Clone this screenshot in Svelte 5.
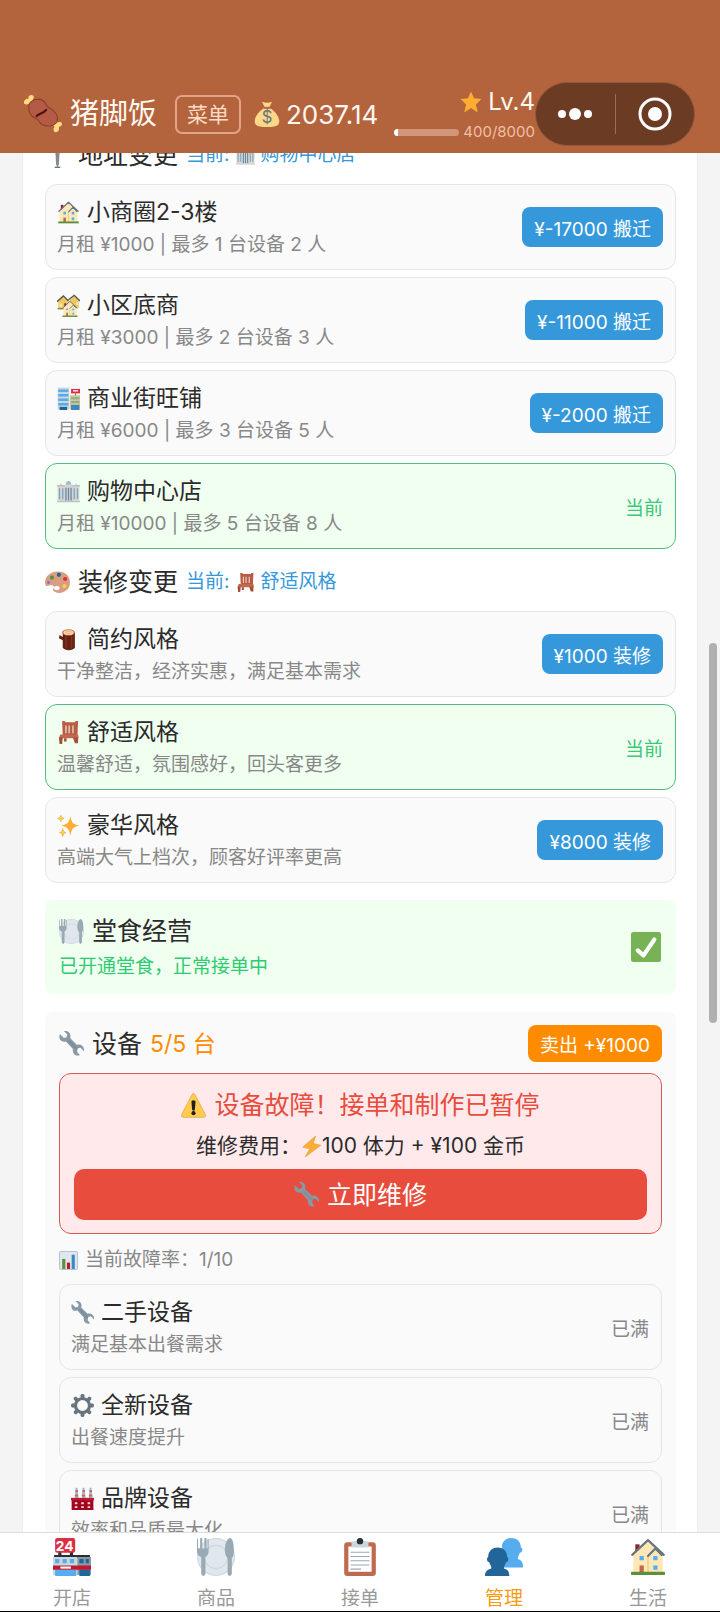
<script>
  let money = $state(2037.14);
  let exp = $state(400);
  let expMax = 8000;

  let places = [
    { id: 1, icon: "house", name: "小商圈2-3楼", desc: "月租 ¥1000 | 最多 1 台设备 2 人", action: "¥-17000 搬迁" },
    { id: 2, icon: "houses", name: "小区底商", desc: "月租 ¥3000 | 最多 2 台设备 3 人", action: "¥-11000 搬迁" },
    { id: 3, icon: "office", name: "商业街旺铺", desc: "月租 ¥6000 | 最多 3 台设备 5 人", action: "¥-2000 搬迁" },
    { id: 4, icon: "mall", name: "购物中心店", desc: "月租 ¥10000 | 最多 5 台设备 8 人", current: true },
  ];
  let styles = [
    { id: 1, icon: "wood", name: "简约风格", desc: "干净整洁，经济实惠，满足基本需求", action: "¥1000 装修" },
    { id: 2, icon: "chair", name: "舒适风格", desc: "温馨舒适，氛围感好，回头客更多", current: true },
    { id: 3, icon: "sparkles", name: "豪华风格", desc: "高端大气上档次，顾客好评率更高", action: "¥8000 装修" },
  ];
  let devices = [
    { id: 1, icon: "wrench", name: "二手设备", desc: "满足基本出餐需求", full: true },
    { id: 2, icon: "gear", name: "全新设备", desc: "出餐速度提升", full: true },
    { id: 3, icon: "factory", name: "品牌设备", desc: "效率和品质最大化", full: true },
  ];
  let tabs = [
    { id: "open", icon: "store", label: "开店" },
    { id: "goods", icon: "plate", label: "商品" },
    { id: "orders", icon: "clipboard", label: "接单" },
    { id: "manage", icon: "people", label: "管理" },
    { id: "life", icon: "house", label: "生活" },
  ];
  let activeTab = $state("manage");
</script>

{#snippet houseShape()}
  <path fill="#8a2432" d="M6 6h4v8H6z" />
  <path fill="#ffe8b6" d="M4 16 18 3l14 13v17H4z" />
  <path fill="none" stroke="#66757f" stroke-width="2" stroke-linecap="round" stroke-linejoin="round" d="M3 16 18 2l15 14M18 17l7-7 6 6" />
  <path fill="#55acee" d="M10 17h4v4h-4zM23 17h4v4h-4zM23 26h4v4h-4z" />
  <path fill="#c1694f" d="M10 26h4v7h-4z" />
  <path fill="none" stroke="#e0c384" d="M18 18v15" />
  <path fill="#5c913b" d="M2 32h32v3H2z" />
{/snippet}

{#snippet icon(name)}
  <svg class="icon" viewBox="0 0 36 36" aria-hidden="true">
    {#if name === "house"}
      {@render houseShape()}
    {:else if name === "houses"}
      <path fill="#f0c75e" d="M2 11l8-8 8 8v13H2zM20 9l7-7 7 7v13H20z" />
      <path fill="none" stroke="#4d5358" stroke-width="2" d="M0 12 10 3l8 8M18 9l9-7 9 9" />
      <path fill="#ffe8b6" d="M4 15h4v5H4zM30 13h3v4h-3z" />
      <path fill="#5c913b" d="M1 22h10v2H1z" />
      <g transform="translate(7 10) scale(.74)">{@render houseShape()}</g>
    {:else if name === "office"}
      <path fill="#ccd6dd" d="M1 1h18v34H1z" />
      <path fill="#55acee" d="M2 4h16v4H2zM2 11h16v4H2zM2 18h16v4H2zM2 25h16v4H2z" />
      <path fill="#226699" d="M4 31h12v5H4z" />
      <path fill="#dd2e44" d="M22 3h14v7H22z" />
      <path fill="#fff" d="M25 5h8v2h-8z" />
      <path fill="#66757f" d="M28 10h2v4h-2z" />
      <path fill="#d9c38a" d="M20 13h16v22H20z" />
      <path fill="#77b5a0" d="M22 16h13v3H22zM22 22h13v3H22z" />
      <path fill="#3b88c3" d="M22 28h13v8H22z" />
    {:else if name === "mall"}
      <path fill="#aab8c2" d="M14 6c0-6 8-6 8 0v4h-8z" />
      <path fill="#e1d3c5" d="M1 9h34v24H1z" />
      <path fill="#ccd6dd" d="M12 7h12v26H12z" />
      <path fill="#66a9d8" d="M3 13h2v17H3zM8 13h2v17H8zM26 13h2v17h-2zM31 13h2v17h-2z" />
      <path fill="#6d8597" d="M13 12h2v20h-2zM17 12h2v20h-2zM21 12h2v20h-2z" />
      <path fill="#b8c2ca" d="M0 8h5V6h2v2h5v2H0zM24 8h5V6h2v2h5v2H24zM0 33h36v2H0z" />
    {:else if name === "pin"}
      <circle cx="18" cy="8" r="7" fill="#dd2e44" />
      <path fill="#808b92" d="M15 14h6l-1 17-2 4-2-4z" />
      <path fill="#66757f" d="M14 34h8v2h-8z" />
    {:else if name === "palette"}
      <path fill="#d99e82" d="M19 2C8 2 0 9 0 18c0 3 1 5 3 5 3 0 6-3 9 0 3 2-2 4 0 7 2 2 5 3 8 3 10 0 16-7 16-15C36 8 29 2 19 2z" />
      <ellipse cx="17" cy="26" rx="4" ry="3" fill="#fff" />
      <circle cx="10" cy="11" r="3" fill="#5c913b" />
      <circle cx="20" cy="7" r="3" fill="#226699" />
      <circle cx="29" cy="13" r="3" fill="#dd2e44" />
      <circle cx="28" cy="23" r="3" fill="#ffcc4d" />
      <circle cx="5" cy="18" r="2" fill="#9268ca" />
    {:else if name === "wood"}
      <path fill="#662113" d="M9 7h19v24c-3 5-16 5-19 0V19l-6-3 1-5 5 3z" />
      <path fill="#853522" d="M22 12h2v20h-2zM13 13h2v18h-2z" />
      <ellipse cx="18" cy="7" rx="10" ry="5" fill="#c1694f" />
      <ellipse cx="18" cy="7" rx="8" ry="4" fill="#ffd3a1" />
      <ellipse cx="18" cy="7" rx="4" ry="2" fill="none" stroke="#d99e82" />
    {:else if name === "chair"}
      <path fill="#b85c43" d="M8 0h4l1 2h15l1-2h4l-1 23H9z" />
      <path fill="#f0dcd2" d="M13 7h2v12h-2zM18 7h2v12h-2zM24 7h2v12h-2z" />
      <path fill="#c1694f" d="M5 21h28l1 6H3z" />
      <path fill="#a34f37" d="M3 26h6l-1 10H4zM25 26h8v9h-5zM11 27h4v5h-4z" />
    {:else if name === "sparkles"}
      <path fill="#ffac33" d="M21 3c2 11 4 13 14 15-10 2-12 5-14 16-2-11-5-14-14-16 9-2 12-4 14-15z" />
      <path fill="#ffcc4d" stroke="#e6a63c" d="M6 2c1 3 2 4 5 5-3 1-4 2-5 5-1-3-2-4-5-5 3-1 4-2 5-5zM9 23c1 4 2 5 5 6-3 1-4 2-5 6-1-4-2-5-5-6 3-1 4-2 5-6z" />
    {:else if name === "plate"}
      <circle cx="18" cy="18" r="18" fill="#ccd6dd" />
      <circle cx="18" cy="18" r="17" fill="#e1e8ed" />
      <circle cx="18" cy="18" r="11" fill="none" stroke="#ccd6dd" stroke-width="1" />
      <path fill="#99aab5" d="M0 1h1v9h2V0h2v10h2V0h2v10h1V1h1v12c0 3-2 4-3 5v16q-2 4-4 0V18c-2-1-4-2-4-5zM31 0c3 0 4 6 4 12 0 4-1 6-2 7v15q-2 4-4 0V19c-5-5-2-18 2-19z" />
    {:else if name === "wrench"}
      <path fill="#8899a6" d="M2 5l5 5 4-1 1-4-5-5c7-1 11 4 9 10l10 10c6-2 11 3 10 9l-5-5-4 1-1 5 4 5c-7 2-11-3-10-9L10 15C4 17-1 12 1 5z" />
      <path fill="#66757f" d="M13 15l2-2 12 12-2 2z" opacity=".3" />
    {:else if name === "gear"}
      <circle cx="18" cy="18" r="11" fill="none" stroke="#66757f" stroke-width="5" />
      {#each [0, 45, 90, 135, 180, 225, 270, 315] as angle}
        <path fill="#66757f" transform="rotate({angle} 18 18)" d="M15 8V2q0-2 3-2t3 2v6z" />
      {/each}
    {:else if name === "factory"}
      <path fill="#a9b4bb" d="M7 1h3l2 18H6zM18 1h3l2 18h-6zM29 1h3l2 18h-6z" />
      <path fill="#be6472" d="M7 5h4v3H7zM18 5h4v3h-4zM29 5h4v3h-4zM6 12h5v3H6zM17 12h5v3h-5zM28 12h5v3h-5z" />
      <path fill="#a0041e" d="M1 18h34v18H1z" />
      <path fill="#be1931" d="M0 17h36v4H0z" />
      <path fill="#f4d7dc" d="M6 24h4v3H6zM16 24h4v3h-4zM26 24h4v3h-4zM6 30h4v3H6zM16 30h4v3h-4zM26 30h4v3h-4z" />
    {:else if name === "warning"}
      <path fill="#ffcc4d" stroke="#d2a53f" d="M16 2q2-3 4 0l15 29q1 4-2 4H3q-3 0-2-4z" />
      <path fill="#231f20" d="M15 12q3-3 6 0l-1 12q-2 3-4 0z" />
      <circle cx="18" cy="29" r="3" fill="#231f20" />
    {:else if name === "bolt"}
      <path fill="#ffac33" stroke="#dc9b3a" stroke-linejoin="round" d="M25 0 3 19l12 3L7 36l27-20-13-3z" />
    {:else if name === "chart"}
      <rect width="36" height="36" rx="4" fill="#b5c6d3" />
      <rect x="2" y="2" width="32" height="32" rx="2" fill="#e1e8ed" />
      <path fill="#5c913b" d="M6 15h6v19H6z" />
      <path fill="#be1931" d="M15 22h6v12h-6z" />
      <path fill="#3b88c3" d="M24 7h6v27h-6z" />
    {:else if name === "check"}
      <rect width="36" height="36" rx="3" fill="#77b255" />
      <path fill="none" stroke="#fff" stroke-width="5" stroke-linecap="round" stroke-linejoin="round" d="M8 22l7 6L28 9" />
    {:else if name === "meat"}
      <path fill="#ffdc84" d="M1 5q1-2 3-1 0-4 3-4 3 0 2 3l-1 2 5 6-3 3-5-6q-3 2-5 0-1-2 1-3zM25 23l3-2 4 5q3-1 4 1 0 3-3 3 1 4-2 5-3 1-3-3l1-2-5-5z" />
      <path fill="#b55a45" stroke="#8a3f2d" d="M7 6c4-3 12-3 14 3 1 3 4 3 7 6 4 3 5 9 2 12s-9 3-13 1c-3-2-2-4-6-6C5 20 2 10 7 6z" />
      <path fill="none" stroke="#4b130c" stroke-width="2" stroke-linecap="round" d="M12 20c1-2 6-2 9-6" />
    {:else if name === "bag"}
      <path fill="#fdd888" d="M11 1q7 3 14 0l-4 8c7 4 14 12 14 19 0 6-4 8-17 8S1 34 1 28C1 21 8 13 15 9z" />
      <path fill="#bf6952" d="M13 8h10v3H13z" />
      <text x="18" y="31" text-anchor="middle" font-size="23" font-family="Inter, sans-serif" fill="#67757f">$</text>
    {:else if name === "star"}
      <path fill="#ffac33" d="M18 1l5 11 12 1-9 9 3 13-11-7-11 7 3-13-9-9 12-1z" />
    {:else if name === "store"}
      <path fill="#292f33" d="M5 13h3v6H5zM16 13h3v6h-3zM1 16h34v3H1z" />
      <rect x="2" width="19" height="14" rx="2" fill="#dd2e44" />
      <text x="11" y="12" text-anchor="middle" font-size="13" font-weight="700" font-family="Inter, sans-serif" fill="#fff">24</text>
      <path fill="#ccd6dd" d="M0 18h23v17H0z" />
      <path fill="#8899a6" d="M23 18h13v17H23z" />
      <path fill="#55acee" d="M2 20h4v4H2zM9 20h4v4H9zM16 20h4v4h-4zM2 30h20v6H2z" />
      <path fill="#226699" d="M25 20h4v4h-4zM31 20h3v4h-3zM25 30h10v6H25z" />
      <path fill="#be1931" d="M0 26h36v4H0z" />
      <path fill="#fff" d="M7 27h10v2H7z" />
    {:else if name === "clipboard"}
      <rect x="3" y="4" width="30" height="32" rx="3" fill="#c1694f" />
      <path fill="#fff" d="M7 8h22v24H7z" />
      <path fill="#ccd6dd" d="M10 3h4q4-6 8 0h4v6H10z" />
      <circle cx="18" cy="3" r="3" fill="#292f33" />
      <path fill="#99aab5" d="M9 13h18v1H9zM9 17h18v1H9zM9 21h18v1H9zM9 25h18v1H9zM9 29h10v1H9z" />
    {:else if name === "people"}
      <path fill="#55acee" d="M16 9c0-12 18-12 18 0 2 0 2 5-1 5-1 3-2 4-2 6 3 1 5 2 5 8H14c0-4 2-5 5-8 0-3-3-5-3-11z" />
      <path fill="#226699" d="M3 18c0-12 18-12 18 0 2 1 1 5-1 5-1 3-2 3-2 6 3 1 5 2 5 7H0c0-5 3-6 6-7 0-3-1-3-2-6-2 0-3-4-1-5z" />
    {/if}
  </svg>
{/snippet}

{#snippet card(item)}
  <li class="card" class:current={item.current}>
    <div class="info">
      <div class="name">{@render icon(item.icon)}<span>{item.name}</span></div>
      <div class="desc">{item.desc}</div>
    </div>
    {#if item.current}
      <span class="tag">当前</span>
    {:else if item.full}
      <span class="tag full">已满</span>
    {:else}
      <button type="button" class="btn">{item.action}</button>
    {/if}
  </li>
{/snippet}

<div class="app">
  <header class="topbar">
    <span class="logo">{@render icon("meat")}</span>
    <h1>猪脚饭</h1>
    <button type="button" class="menu">菜单</button>
    <span class="money">{@render icon("bag")}{money}</span>
    <div class="level">
      <div class="lv">{@render icon("star")}<span>Lv.4</span></div>
      <div class="exp">
        <div class="bar"><div class="fill" style="width: {(exp / expMax) * 100}%"></div></div>
        <span>{exp}/{expMax}</span>
      </div>
    </div>
    <div class="capsule">
      <button type="button" aria-label="更多">
        <svg viewBox="0 0 36 14" width="36" height="14"><circle cx="5" cy="7" r="4" /><circle cx="18" cy="7" r="6" /><circle cx="31" cy="7" r="4" /></svg>
      </button>
      <button type="button" aria-label="关闭">
        <svg viewBox="0 0 34 34" width="34" height="34"><circle cx="17" cy="17" r="15" fill="none" stroke="#fff" stroke-width="3" /><circle cx="17" cy="17" r="7" /></svg>
      </button>
    </div>
  </header>

  <main>
    <div class="panel">
      <h2>{@render icon("pin")}地址变更 <small>当前: {@render icon("mall")}购物中心店</small></h2>
      <ul>
        {#each places as item (item.id)}{@render card(item)}{/each}
      </ul>

      <h2>{@render icon("palette")}装修变更 <small>当前: {@render icon("chair")}舒适风格</small></h2>
      <ul>
        {#each styles as item (item.id)}{@render card(item)}{/each}
      </ul>

      <section class="dining">
        <div>
          <h3>{@render icon("plate")}堂食经营</h3>
          <p>已开通堂食，正常接单中</p>
        </div>
        <span class="done">{@render icon("check")}</span>
      </section>

      <section class="devices">
        <div class="devices-head">
          <h3>{@render icon("wrench")}设备 <em>5/5 台</em></h3>
          <button type="button" class="btn sell">卖出 +¥1000</button>
        </div>
        <div class="alert">
          <div class="alert-title">{@render icon("warning")}设备故障！接单和制作已暂停</div>
          <div class="cost">维修费用：{@render icon("bolt")}100 体力 + ¥100 金币</div>
          <button type="button" class="repair">{@render icon("wrench")}立即维修</button>
        </div>
        <div class="rate">{@render icon("chart")}当前故障率：1/10</div>
        <ul>
          {#each devices as item (item.id)}{@render card(item)}{/each}
        </ul>
      </section>
    </div>
    <div class="thumb"></div>
  </main>

  <nav>
    {#each tabs as tab (tab.id)}
      <button type="button" class:active={activeTab === tab.id} onclick={() => (activeTab = tab.id)}>
        {@render icon(tab.icon)}
        <span>{tab.label}</span>
      </button>
    {/each}
  </nav>
</div>

<style>
  :global(body) {
    margin: 0;
    background: #f4f4f4;
  }
  .app {
    display: flex;
    flex-direction: column;
    height: 100vh;
    overflow: hidden;
    font-family: Inter, "Noto Sans CJK SC", sans-serif;
    font-size: 19px;
    color: #2b2b2b;
  }
  .app * {
    box-sizing: border-box;
  }
  button {
    border: 0;
    padding: 0;
    background: none;
    font: inherit;
    color: inherit;
    cursor: pointer;
  }
  h1, h2, h3, p, ul {
    margin: 0;
    padding: 0;
    font-weight: 400;
  }
  ul {
    list-style: none;
    display: grid;
    gap: 7px;
  }
  .icon {
    width: 1em;
    height: 1em;
    flex: none;
    display: block;
  }

  .topbar {
    display: flex;
    align-items: center;
    flex: none;
    padding: 82px 25px 7px 24px;
    background: #b3643c;
    color: #fff8f2;
    white-space: nowrap;
  }
  .logo {
    font-size: 38px;
  }
  h1 {
    margin-left: 8px;
    font-size: 29px;
    line-height: 38px;
  }
  .menu {
    margin-left: 18px;
    padding: 0 10px;
    height: 39px;
    border: 2px solid #e2a486;
    border-radius: 7px;
    font-size: 21px;
    line-height: 35px;
    color: #ffdcc8;
  }
  .money {
    display: flex;
    align-items: center;
    gap: 6px;
    margin-left: 13px;
    font-size: 26px;
  }
  .level {
    margin-left: auto;
    padding-top: 4px;
  }
  .lv {
    display: flex;
    align-items: center;
    justify-content: flex-end;
    gap: 6px;
    font-size: 24px;
    line-height: 32px;
  }
  .lv .icon {
    font-size: 22px;
  }
  .exp {
    display: flex;
    align-items: center;
    justify-content: flex-end;
    gap: 4px;
    font-size: 15px;
    line-height: 28px;
    color: #f2bfa5;
  }
  .bar {
    width: 65px;
    height: 7px;
    border-radius: 4px;
    overflow: hidden;
    background: #d1957a;
  }
  .fill {
    height: 100%;
    background: #fff;
  }
  .capsule {
    display: flex;
    flex: none;
    align-items: center;
    width: 160px;
    height: 64px;
    border: 1px solid #94583e;
    border-radius: 32px;
    background: #6c3b24;
  }
  .capsule button {
    flex: 1;
    height: 40px;
    display: grid;
    place-items: center;
  }
  .capsule button + button {
    border-left: 1px solid #95705f;
  }
  .capsule svg {
    fill: #fff;
  }

  main {
    position: relative;
    flex: 1;
    min-height: 0;
    overflow: hidden;
    padding: 0 22px;
  }
  .panel {
    margin-top: -31px;
    padding: 0 21px 20px 22px;
    border: solid #ebebeb;
    border-width: 0 1px;
    background: #fff;
  }
  .thumb {
    position: absolute;
    top: 35.5%;
    right: 3px;
    width: 8px;
    height: 27.6%;
    border-radius: 4px;
    background: #b0b0b0;
  }
  h2 {
    display: flex;
    align-items: center;
    gap: 8px;
    padding: 14px 0 10px;
    font-size: 25px;
    line-height: 38px;
  }
  small {
    display: flex;
    align-items: center;
    gap: 6px;
    font-size: 19px;
    color: #3498db;
  }
  .card {
    display: flex;
    align-items: center;
    justify-content: space-between;
    padding: 11px 12px 11px 11px;
    border: 1px solid #e6e6e6;
    border-radius: 12px;
    background: #fafafa;
  }
  .card.current {
    border-color: #4fbd82;
    background: #f0fff0;
  }
  .name {
    display: flex;
    align-items: center;
    gap: 7px;
    margin-bottom: 3px;
    font-size: 23px;
    line-height: 33px;
  }
  .desc {
    line-height: 26px;
    color: #888;
  }
  .tag {
    color: #3cc779;
  }
  .tag.full {
    color: #888;
  }
  .btn {
    height: 40px;
    padding: 0 12px;
    border-radius: 8px;
    background: #3498db;
    color: #fff;
    white-space: nowrap;
  }

  .dining {
    display: flex;
    align-items: center;
    justify-content: space-between;
    margin-top: 17px;
    padding: 13px 15px 14px 14px;
    border-radius: 8px;
    background: #f0fff0;
  }
  h3 {
    display: flex;
    align-items: center;
    gap: 8px;
    font-size: 25px;
    line-height: 36px;
  }
  .dining p {
    margin-top: 5px;
    line-height: 26px;
    color: #2ecc71;
  }
  .done {
    font-size: 30px;
  }
  .devices {
    margin-top: 18px;
    padding: 13px 14px;
    border-radius: 8px;
    background: #fafafa;
  }
  .devices-head {
    display: flex;
    align-items: center;
    justify-content: space-between;
  }
  em {
    font-style: normal;
    font-size: 23px;
    color: #ff8c00;
  }
  .btn.sell {
    height: 37px;
    background: #ff8c00;
  }
  .alert {
    display: flex;
    flex-direction: column;
    gap: 8px;
    margin-top: 11px;
    padding: 13px 14px;
    border: 1px solid #d65b54;
    border-radius: 12px;
    background: #ffe9eb;
  }
  .alert-title, .cost, .repair {
    display: flex;
    align-items: center;
    justify-content: center;
  }
  .alert-title {
    gap: 8px;
    font-size: 25px;
    line-height: 36px;
    color: #e74c3c;
  }
  .cost {
    font-size: 21px;
    line-height: 30px;
  }
  .repair {
    gap: 8px;
    height: 51px;
    border-radius: 10px;
    background: #e74c3c;
    font-size: 25px;
    line-height: 36px;
    color: #fff;
  }
  .rate {
    display: flex;
    align-items: center;
    gap: 7px;
    margin: 13px 0 11px;
    line-height: 26px;
    color: #888;
  }

  nav {
    display: flex;
    flex: none;
    border-top: 1px solid #ddd;
    border-bottom: 1px solid #000;
    background: #fff;
  }
  nav button {
    flex: 1;
    display: flex;
    flex-direction: column;
    align-items: center;
    gap: 10px;
    padding-top: 5px;
    line-height: 25px;
    color: #999;
  }
  nav .icon {
    font-size: 38px;
  }
  nav .active {
    color: #f39c12;
  }
</style>
